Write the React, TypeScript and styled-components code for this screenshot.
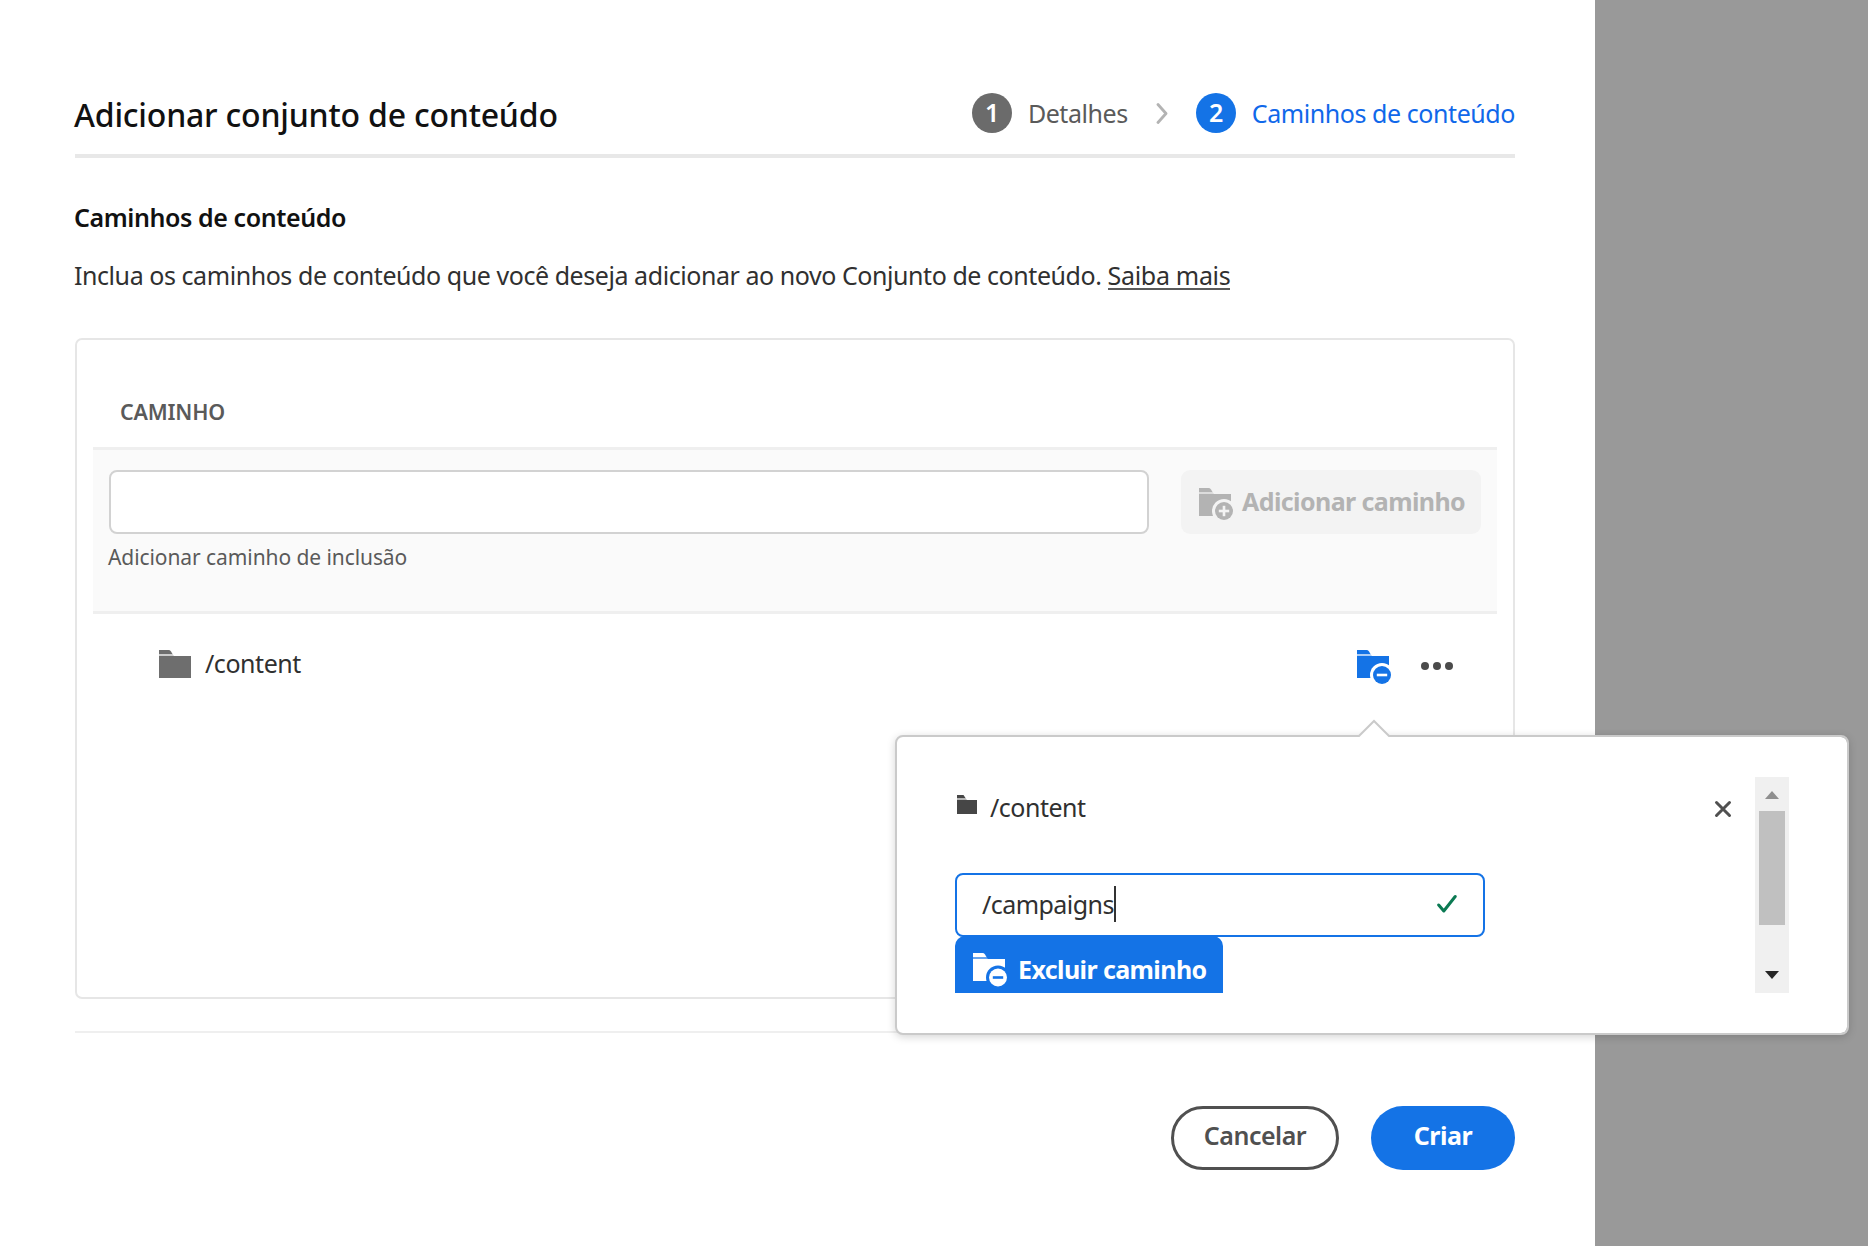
import React from 'react';
import styled, { createGlobalStyle } from 'styled-components';

const GlobalStyle = createGlobalStyle`
  *, *::before, *::after { box-sizing: border-box; }
  body {
    margin: 0;
    background: #999999;
    font-family: "Noto Sans", "Open Sans", sans-serif;
    font-size: 25px;
    color: #303030;
    overflow: hidden;
  }
  button, input { font: inherit; margin: 0; }
`;

const Page = styled.div`
  height: 1246px;
  background: #999999;
`;

const Dialog = styled.main`
  display: flex;
  flex-direction: column;
  width: 1595px;
  height: 1246px;
  padding: 80px 80px 0 75px;
  background: #ffffff;
`;

const Header = styled.header`
  display: flex;
  align-items: center;
  justify-content: space-between;
  height: 78px;
  padding-bottom: 8px;
  border-bottom: 4px solid #e8e8e8;
`;

const Title = styled.h1`
  margin: 3px 0 0 -1px;
  font-size: 32px;
  font-weight: 500;
  line-height: 40px;
  letter-spacing: -0.2px;
  color: #111111;
`;

const Steps = styled.ol`
  display: flex;
  align-items: center;
  margin: 0;
  padding: 0;
  list-style: none;
`;

const Step = styled.li<{ $active?: boolean }>`
  display: flex;
  align-items: center;
  gap: 16px;
  line-height: 34px;
  letter-spacing: -0.43px;
  color: ${(p) => (p.$active ? '#1068ea' : '#5a5a5a')};
`;

const StepNumber = styled.span<{ $active?: boolean }>`
  display: flex;
  align-items: center;
  justify-content: center;
  width: 40px;
  height: 40px;
  padding-bottom: 3px;
  border-radius: 50%;
  background: ${(p) => (p.$active ? '#1473e6' : '#6b6b6b')};
  color: #ffffff;
  font-weight: 600;
`;

const StepSeparator = styled.svg`
  margin: 0 28px;
`;

const SectionTitle = styled.h2`
  margin: 42px 0 0 -1px;
  font-size: 25px;
  font-weight: 600;
  line-height: 34px;
  letter-spacing: -0.42px;
  color: #111111;
`;

const Intro = styled.p`
  margin: 24px 0 0 -1px;
  line-height: 34px;
  letter-spacing: -0.44px;
  white-space: nowrap;
`;

const MoreLink = styled.a`
  display: inline-block;
  height: 32px;
  border-bottom: 2px solid #5a5a5a;
  letter-spacing: -0.3px;
`;

const Card = styled.section`
  display: flex;
  flex-direction: column;
  flex: none;
  height: 661px;
  margin-top: 46px;
  padding: 0 16px;
  border: 2px solid #e6e6e6;
  border-radius: 7px;
`;

const ColumnTitle = styled.h3`
  height: 107px;
  margin: 0;
  padding: 57px 0 0 27px;
  font-size: 21.5px;
  font-weight: 600;
  line-height: 30px;
  letter-spacing: -0.2px;
  color: #5a5a5a;
`;

const AddBand = styled.form`
  display: flex;
  align-items: flex-start;
  gap: 32px;
  height: 167px;
  padding: 20px 16px 0;
  border-top: 3px solid #efefef;
  border-bottom: 3px solid #efefef;
  background: #fafafa;
`;

const Field = styled.label`
  display: flex;
  flex-direction: column;
  width: 1040px;
`;

const PathInput = styled.input`
  height: 64px;
  padding: 0 20px;
  border: 2px solid #d2d2d2;
  border-radius: 8px;
  background: #ffffff;
  outline: none;
`;

const HelpText = styled.span`
  margin: 8px 0 0 -1px;
  font-size: 21px;
  line-height: 30px;
  letter-spacing: -0.08px;
  color: #5a5a5a;
`;

const AddButton = styled.button`
  display: flex;
  align-items: flex-start;
  gap: 9px;
  width: 300px;
  height: 64px;
  padding: 18px 0 0 18px;
  border: 0;
  border-radius: 9px;
  background: #f3f3f3;
  color: #b3b3b3;
  font-weight: 700;
  line-height: 34px;
  letter-spacing: -0.6px;
  white-space: nowrap;
`;

const AddLabel = styled.span`
  margin-top: -4px;
`;

const PathRow = styled.div`
  display: flex;
  align-items: flex-start;
  padding: 36px 44px 0 66px;
`;

const PathName = styled.span`
  flex: 1;
  margin: -4px 0 0 12px;
  line-height: 34px;
  letter-spacing: -0.45px;
`;

const ExcludeAnchor = styled.div`
  position: relative;
  width: 34px;
  height: 36px;
`;

const MoreDots = styled.svg`
  margin: 11px 0 0 30px;
`;

const Popover = styled.div`
  position: absolute;
  z-index: 2;
  top: 85px;
  left: -462px;
  display: flex;
  width: 954px;
  height: 300px;
  padding: 40px 58px 40px 58px;
  border: 2px solid #cacaca;
  border-radius: 8px;
  background: #ffffff;
  background-clip: padding-box;
  box-shadow: 0 2px 8px rgba(0, 0, 0, 0.17);
`;

const PopoverTip = styled.svg`
  position: absolute;
  top: -18px;
  left: 459px;
`;

const PopoverBody = styled.div`
  flex: 1;
  display: flex;
  flex-direction: column;
  align-items: flex-start;
  height: 216px;
  overflow: hidden;
`;

const PopoverHeading = styled.div`
  display: flex;
  align-items: flex-start;
  flex: none;
  width: 100%;
  height: 96px;
  padding: 13px 23px 0 2px;
`;

const PopoverPath = styled.span`
  flex: 1;
  margin-left: 13px;
  line-height: 34px;
  letter-spacing: -0.5px;
`;

const SmallFolder = styled.svg`
  margin-top: 5px;
`;

const CloseIcon = styled.svg`
  margin-top: 10px;
`;

const ExcludeField = styled.div`
  display: flex;
  align-items: center;
  flex: none;
  width: 530px;
  height: 64px;
  padding: 0 26px 2px 25px;
  border: 2px solid #1473e6;
  border-radius: 8px;
  letter-spacing: -0.55px;
`;

const Caret = styled.span`
  width: 2px;
  height: 36px;
  margin-right: auto;
  background: #333333;
`;

const ExcludeButton = styled.button`
  display: flex;
  align-items: flex-start;
  gap: 11px;
  flex: none;
  width: 268px;
  height: 66px;
  margin-top: -1px;
  padding: 17px 0 0 18px;
  border: 0;
  border-radius: 10px;
  background: #1473e6;
  color: #ffffff;
  font-weight: 700;
  line-height: 34px;
  letter-spacing: -0.6px;
  white-space: nowrap;
`;

const ExcludeLabel = styled.span`
  margin-top: -1px;
`;

const ScrollTrack = styled.div`
  display: flex;
  flex-direction: column;
  align-items: center;
  width: 34px;
  height: 216px;
  padding: 14px 0;
  background: #f0f0f0;
`;

const ScrollThumb = styled.div`
  width: 26px;
  height: 114px;
  margin: 12px 0 auto;
  background: #c0c0c0;
`;

const Footer = styled.footer`
  display: flex;
  justify-content: flex-end;
  gap: 32px;
  margin-top: 32px;
  padding-top: 73px;
  border-top: 2px solid #efefef;
`;

const PillButton = styled.button<{ $primary?: boolean }>`
  width: ${(p) => (p.$primary ? 144 : 168)}px;
  height: 64px;
  padding: 0 0 6px;
  border: ${(p) => (p.$primary ? '0' : '3px solid #505050')};
  border-radius: 32px;
  background: ${(p) => (p.$primary ? '#1473e6' : '#ffffff')};
  color: ${(p) => (p.$primary ? '#ffffff' : '#505050')};
  font-weight: ${(p) => (p.$primary ? 700 : 600)};
  letter-spacing: -0.5px;
`;

type FolderProps = { color: string; background?: string; badge?: 'plus' | 'minus'; badgeY?: number };

function FolderIcon({ color, background = '#ffffff', badge, badgeY = 25 }: FolderProps) {
  return (
    <svg width="34" height="36" viewBox="0 0 34 36" fill={color}>
      <path d="M0 0H9.5Q11 0 12 1.4L13.5 4H0Z" />
      <path d="M0 4H13.5L15 6H0Z" opacity="0.35" />
      <path d="M0 6H32V28H0Z" />
      {badge && (
        <>
          <circle cx="25" cy={badgeY} r="12" fill={background} />
          <circle cx="25" cy={badgeY} r="9" />
          <rect x="19.8" y={badgeY - 1.3} width="10.4" height="2.6" fill={background} />
          {badge === 'plus' && <rect x="23.7" y={badgeY - 5.2} width="2.6" height="10.4" fill={background} />}
        </>
      )}
    </svg>
  );
}

export default function App() {
  return (
    <Page>
      <GlobalStyle />
      <Dialog>
        <Header>
          <Title>Adicionar conjunto de conteúdo</Title>
          <Steps>
            <Step>
              <StepNumber>1</StepNumber>
              Detalhes
            </Step>
            <StepSeparator width="12" height="22" viewBox="0 0 12 22" fill="none" stroke="#b3b3b3" strokeWidth="2.8" strokeLinecap="round" strokeLinejoin="round">
              <path d="M2 2.5L10 11.5L2 20.5" />
            </StepSeparator>
            <Step $active>
              <StepNumber $active>2</StepNumber>
              Caminhos de conteúdo
            </Step>
          </Steps>
        </Header>

        <SectionTitle>Caminhos de conteúdo</SectionTitle>
        <Intro>
          Inclua os caminhos de conteúdo que você deseja adicionar ao novo Conjunto de conteúdo. <MoreLink>Saiba mais</MoreLink>
        </Intro>

        <Card>
          <ColumnTitle>CAMINHO</ColumnTitle>
          <AddBand>
            <Field>
              <PathInput />
              <HelpText>Adicionar caminho de inclusão</HelpText>
            </Field>
            <AddButton type="button" disabled>
              <FolderIcon color="#b3b3b3" background="#f3f3f3" badge="plus" badgeY={23} />
              <AddLabel>Adicionar caminho</AddLabel>
            </AddButton>
          </AddBand>
          <PathRow>
            <FolderIcon color="#6e6e6e" />
            <PathName>/content</PathName>
            <ExcludeAnchor>
              <FolderIcon color="#1473e6" badge="minus" />
              <Popover>
                <PopoverTip width="36" height="19" viewBox="0 0 36 19">
                  <path d="M2 19V18L18 2L34 18V19Z" fill="#ffffff" />
                  <path d="M0 17H3L18 2L33 17H36" fill="none" stroke="#cacaca" strokeWidth="2" />
                </PopoverTip>
                <PopoverBody>
                  <PopoverHeading>
                    <SmallFolder width="20" height="19" viewBox="0 0 20 19" fill="#464646">
                      <path d="M0 0H6.5L8.5 3H0Z" />
                      <path d="M0 3H8.5L10 5H0Z" opacity="0.4" />
                      <path d="M0 5H20V19H0Z" />
                    </SmallFolder>
                    <PopoverPath>/content</PopoverPath>
                    <CloseIcon width="18" height="18" viewBox="0 0 18 18" stroke="#505050" strokeWidth="3" strokeLinecap="round">
                      <path d="M2.5 2.5L15.5 15.5M15.5 2.5L2.5 15.5" />
                    </CloseIcon>
                  </PopoverHeading>
                  <ExcludeField>
                    <span>/campaigns</span>
                    <Caret />
                    <svg width="20" height="20" viewBox="0 0 20 20" fill="none" stroke="#0b7a53" strokeWidth="3" strokeLinecap="round" strokeLinejoin="round">
                      <path d="M1.7 11L6.8 17L18.2 2.5" />
                    </svg>
                  </ExcludeField>
                  <ExcludeButton type="button">
                    <FolderIcon color="#ffffff" background="#1473e6" badge="minus" badgeY={24.5} />
                    <ExcludeLabel>Excluir caminho</ExcludeLabel>
                  </ExcludeButton>
                </PopoverBody>
                <ScrollTrack>
                  <svg width="14" height="8" viewBox="0 0 14 8">
                    <path d="M7 0L14 8H0Z" fill="#8f8f8f" />
                  </svg>
                  <ScrollThumb />
                  <svg width="14" height="8" viewBox="0 0 14 8">
                    <path d="M0 0H14L7 8Z" fill="#262626" />
                  </svg>
                </ScrollTrack>
              </Popover>
            </ExcludeAnchor>
            <MoreDots width="32" height="10" viewBox="0 0 32 10" fill="#4b4b4b">
              <circle cx="4" cy="5" r="4" />
              <circle cx="16" cy="5" r="4" />
              <circle cx="28" cy="5" r="4" />
            </MoreDots>
          </PathRow>
        </Card>

        <Footer>
          <PillButton type="button">Cancelar</PillButton>
          <PillButton type="button" $primary>Criar</PillButton>
        </Footer>
      </Dialog>
    </Page>
  );
}
